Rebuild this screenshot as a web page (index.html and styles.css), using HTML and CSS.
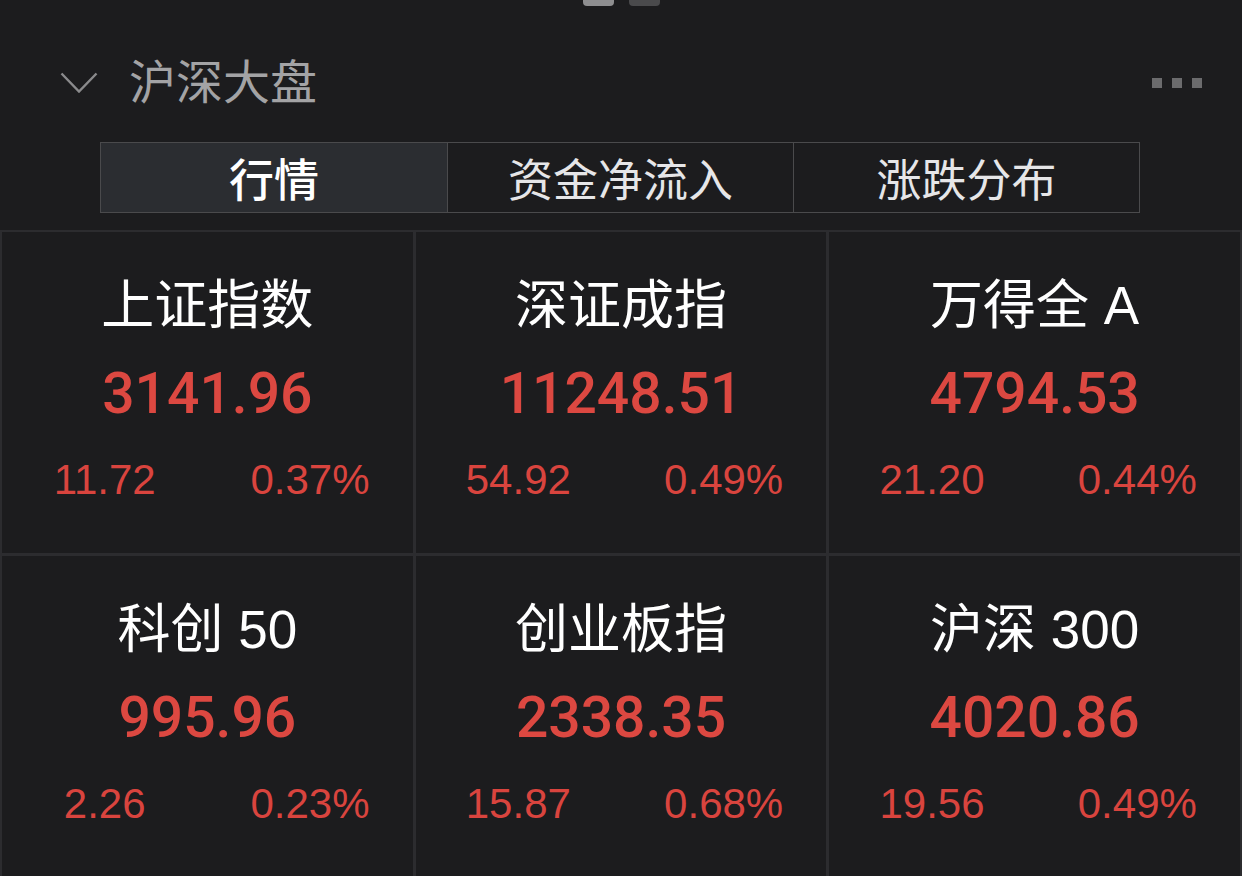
FILE: index.html
```html
<!DOCTYPE html>
<html lang="zh-CN">
  <head>
    <meta charset="UTF-8" />
    <meta name="viewport" content="width=device-width, initial-scale=1.0" />
    <title>沪深大盘</title>

    <link rel="stylesheet" href="styles.css">
  </head>
  <body>
    <div class="pager">
      <span class="pager__dot pager__dot--on"></span>
      <span class="pager__dot"></span>
    </div>

    <div class="panelHeader">
      <svg class="panelHeader__toggle" width="38" height="22" viewBox="0 0 38 22">
        <polyline points="1.5,1.5 19,19.5 36.5,1.5" fill="none" stroke="#8a8a8c" stroke-width="2.4" />
      </svg>
      <span class="panelHeader__title">沪深大盘</span>
      <div class="panelHeader__more">
        <span></span><span></span><span></span>
      </div>
    </div>

    <div class="tabs">
      <div class="tabs__item tabs__item--active">行情</div>
      <div class="tabs__item">资金净流入</div>
      <div class="tabs__item">涨跌分布</div>
    </div>

    <div class="indexGrid">
      <div class="indexCell">
        <div class="indexCell__name">上证指数</div>
        <div class="indexCell__price">3141.96</div>
        <div class="indexCell__change"><span>11.72</span><span>0.37%</span></div>
      </div>
      <div class="indexCell">
        <div class="indexCell__name">深证成指</div>
        <div class="indexCell__price">11248.51</div>
        <div class="indexCell__change"><span>54.92</span><span>0.49%</span></div>
      </div>
      <div class="indexCell">
        <div class="indexCell__name">万得全 A</div>
        <div class="indexCell__price">4794.53</div>
        <div class="indexCell__change"><span>21.20</span><span>0.44%</span></div>
      </div>
      <div class="indexCell">
        <div class="indexCell__name">科创 50</div>
        <div class="indexCell__price">995.96</div>
        <div class="indexCell__change"><span>2.26</span><span>0.23%</span></div>
      </div>
      <div class="indexCell">
        <div class="indexCell__name">创业板指</div>
        <div class="indexCell__price">2338.35</div>
        <div class="indexCell__change"><span>15.87</span><span>0.68%</span></div>
      </div>
      <div class="indexCell">
        <div class="indexCell__name">沪深 300</div>
        <div class="indexCell__price">4020.86</div>
        <div class="indexCell__change"><span>19.56</span><span>0.49%</span></div>
      </div>
    </div>
  </body>
</html>
```

FILE: styles.css
```css
body {
  margin: 0;
  background-color: #1c1c1e;
  font-family: "Liberation Sans", "Noto Sans CJK SC", sans-serif;
  color: #ffffff;
  overflow: hidden;
}

/* page indicator at the very top */
.pager {
  display: flex;
  justify-content: center;
  gap: 15px;
  height: 6px;
}

.pager__dot {
  display: block;
  width: 31px;
  height: 6px;
  background-color: #4a4a4c;
  border-radius: 0 0 4px 4px;
}

.pager__dot--on {
  background-color: #8e8e90;
}

.panelHeader {
  display: flex;
  align-items: center;
  height: 66px;
  margin-top: 44px;
  padding: 0 40px 0 60px;
}

.panelHeader__toggle {
  display: block;
  margin-right: 31px;
}

.panelHeader__title {
  font-size: 47px;
  line-height: 66px;
  color: #a3a3a5;
}

.panelHeader__more {
  display: flex;
  gap: 10px;
  margin-left: auto;
}

.panelHeader__more span {
  display: block;
  width: 10px;
  height: 10px;
  background-color: #6b6b6d;
}

.tabs {
  display: grid;
  grid-template-columns: repeat(3, 1fr);
  height: 69px;
  margin: 26px 102px 0 100px;
  border: 1px solid #4a4a4c;
}

.tabs__item {
  display: flex;
  align-items: center;
  justify-content: center;
  font-size: 45px;
  color: #e6e6e8;
}

.tabs__item + .tabs__item {
  border-left: 1px solid #4a4a4c;
}

.tabs__item--active {
  background-color: #2b2d31;
  color: #ffffff;
  font-weight: 500;
}

/* 3 x 2 index tiles, the lines are the grid background showing through */
.indexGrid {
  display: grid;
  grid-template-columns: repeat(3, 1fr);
  grid-auto-rows: 321px;
  gap: 3px;
  margin-top: 17px;
  padding: 2px 2px 0 2px;
  background-color: #2c2c2f;
}

.indexCell {
  display: flex;
  flex-direction: column;
  align-items: center;
  padding-top: 44px;
  background-color: #1c1c1e;
}

.indexCell__name {
  font-size: 53px;
  line-height: 60px;
  color: #ffffff;
}

.indexCell__price {
  margin-top: 23px;
  font-family: Roboto, "Liberation Sans", sans-serif;
  font-size: 57px;
  font-weight: 500;
  line-height: 70px;
  color: #dc4841;
}

.indexCell__change {
  display: grid;
  grid-template-columns: 1fr 1fr;
  width: 100%;
  margin-top: 26px;
  font-size: 42px;
  line-height: 50px;
  color: #d9443e;
  text-align: center;
}
```
